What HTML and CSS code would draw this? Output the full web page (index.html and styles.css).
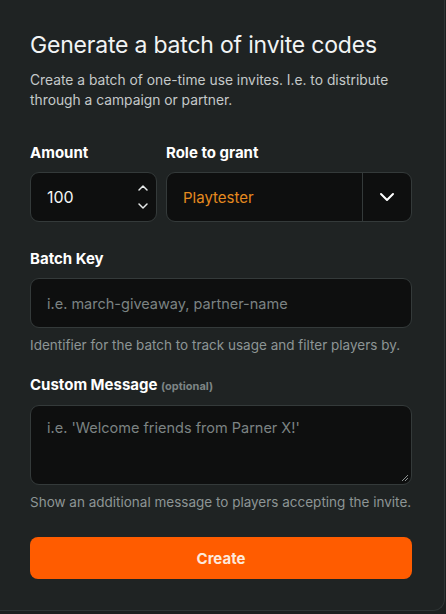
FILE: index.html
```html
<!DOCTYPE html>
<html>
<head>
<meta charset="utf-8">
<link rel="stylesheet" href="styles.css">
</head>
<body>
<div class="card">
  <h1 class="title">Generate a batch of invite codes</h1>
  <p class="subtitle">Create a batch of one-time use invites. I.e. to distribute through a campaign or partner.</p>

  <div class="row">
    <div class="field amount-field">
      <label class="label">Amount</label>
      <div class="input number">
        <span class="value">100</span>
        <span class="spinner">
          <svg width="12" height="8" viewBox="0 0 12 8"><path d="M2 6 L6 2 L10 6" fill="none" stroke="#e6e9e9" stroke-width="1.5" stroke-linecap="round" stroke-linejoin="round"/></svg>
          <svg width="12" height="8" viewBox="0 0 12 8"><path d="M2 2 L6 6 L10 2" fill="none" stroke="#e6e9e9" stroke-width="1.5" stroke-linecap="round" stroke-linejoin="round"/></svg>
        </span>
      </div>
    </div>
    <div class="field role-field">
      <label class="label">Role to grant</label>
      <div class="input select">
        <span class="role">Playtester</span>
        <span class="select-btn">
          <svg width="16" height="10" viewBox="0 0 16 10"><path d="M2 2 L8 8 L14 2" fill="none" stroke="#ffffff" stroke-width="2" stroke-linecap="round" stroke-linejoin="round"/></svg>
        </span>
      </div>
    </div>
  </div>

  <div class="field block">
    <label class="label">Batch Key</label>
    <div class="input text"><span class="placeholder">i.e. march-giveaway, partner-name</span></div>
    <p class="help">Identifier for the batch to track usage and filter players by.</p>
  </div>

  <div class="field block">
    <label class="label">Custom Message <span class="optional">(optional)</span></label>
    <div class="input textarea"><span class="placeholder">i.e. 'Welcome friends from Parner X!'</span>
      <svg class="grip" width="8" height="8" viewBox="0 0 8 8"><path d="M7 1 L1 7 M7 4 L4 7" stroke="#8a9090" stroke-width="1"/></svg>
    </div>
    <p class="help">Show an additional message to players accepting the invite.</p>
  </div>

  <button class="create">Create</button>
</div>
</body>
</html>
```
FILE: styles.css
```css
html, body {
  margin: 0;
  padding: 0;
  background: #1c1f1f;
}
body {
  font-family: "Inter", "Noto Sans", sans-serif;
  color: #eef0f0;
  width: 446px;
  height: 614px;
  overflow: hidden;
}
.card {
  box-sizing: border-box;
  width: 445px;
  height: 611px;
  background: #1f2323;
  border-right: 1px solid #2f3535;
  border-bottom: 1px solid #2f3535;
  border-bottom-right-radius: 12px;
  padding: 29px 32px 0 30px;
}
.title {
  margin: 0;
  font-size: 23px;
  font-weight: 400;
  line-height: 32px;
  letter-spacing: -0.2px;
  color: #f2f4f4;
}
.subtitle {
  margin: 9px 0 0;
  font-size: 13.8px;
  line-height: 20px;
  color: #c4c9c9;
}
.row {
  display: flex;
  gap: 9px;
  margin-top: 33px;
}
.field {
  display: flex;
  flex-direction: column;
}
.amount-field { width: 127px; }
.role-field { flex: 1; }
.label {
  font-size: 15px;
  font-weight: 700;
  line-height: 20px;
  color: #ffffff;
  margin-bottom: 9px;
}
.optional {
  font-size: 11px;
  font-weight: 700;
  color: #7d8585;
}
.input {
  box-sizing: border-box;
  background: #0e0f0f;
  border: 1px solid #343a3a;
  border-radius: 9px;
  height: 50px;
  display: flex;
  align-items: center;
}
.number {
  padding: 0 7px 0 16px;
  justify-content: space-between;
}
.value {
  font-size: 16px;
  color: #f4f6f6;
}
.spinner {
  display: flex;
  flex-direction: column;
  gap: 10px;
}
.spinner svg { display: block; }
.select {
  padding-left: 16px;
  justify-content: space-between;
  overflow: hidden;
}
.role {
  font-size: 15px;
  color: #e58a1f;
}
.select-btn {
  width: 48px;
  height: 100%;
  border-left: 1px solid #343a3a;
  display: flex;
  align-items: center;
  justify-content: center;
}
.block { margin-top: 27px; }
.block + .block { margin-top: 21px; }
.text { padding-left: 16px; }
.placeholder {
  font-size: 14.5px;
  color: #7c8383;
}
.textarea {
  position: relative;
  height: 80px;
  align-items: flex-start;
  padding: 13px 16px;
}
.grip {
  position: absolute;
  right: 2px;
  bottom: 2px;
}
.help {
  margin: 8px 0 0;
  font-size: 13.5px;
  line-height: 18px;
  color: #8d9595;
}
.create {
  display: block;
  width: 100%;
  height: 42px;
  margin-top: 26px;
  border: none;
  border-radius: 8px;
  background: #ff5c00;
  color: #fde9dc;
  font-family: "Inter", "Noto Sans", sans-serif;
  font-size: 15px;
  font-weight: 700;
}
```
